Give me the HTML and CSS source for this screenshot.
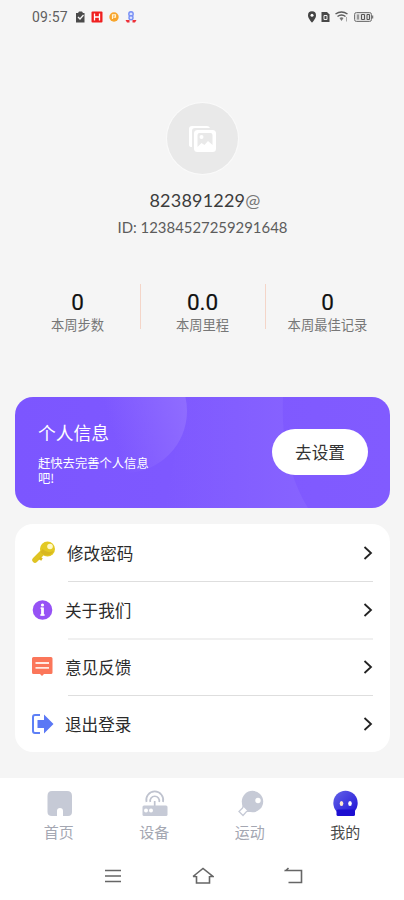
FILE: index.html
```html
<!DOCTYPE html>
<html lang="zh-CN">
<head>
<meta charset="utf-8">
<meta name="viewport" content="width=device-width, initial-scale=1">
<title>我的</title>
<link rel="stylesheet" href="styles.css">
</head>
<body>
<div class="screen">
  <header class="status">
    <span class="time">09:57</span>
    <svg class="status-apps" width="66" height="16" viewBox="0 0 66 16">
      <path d="M2 4h2l1-1.500h3l1 1.500h1.500v9.500H2z" fill="#4a4a4a"/>
      <path d="M4 8l2 2 3.500-4" fill="none" stroke="#f5f5f5" stroke-width="1.300"/>
      <rect x="17.500" y="2.500" width="11" height="11" rx="1" fill="#f02020"/>
      <path d="M20.500 4.500v7M25.500 4.500v7M20.500 8h5" stroke="#fff" stroke-width="1.300"/>
      <circle cx="40" cy="8" r="4.700" fill="#f8a52c"/>
      <path d="M38.500 10V5.800h3v2.400h-2" fill="none" stroke="#fff3d6" stroke-width="1.200"/>
      <circle cx="57" cy="5" r="2.200" fill="#dce3ff" stroke="#7890f5" stroke-width="1.400"/>
      <circle cx="57" cy="8.800" r="2" fill="#dce3ff" stroke="#7890f5" stroke-width="1.400"/>
      <path d="M51.500 11l4 0 0 2.500h-2.500zM62.500 11l-4 0 0 2.500h2.500z" fill="#ed3038"/>
    </svg>
    <svg class="status-system" width="68" height="16" viewBox="0 0 68 16">
      <path d="M5 2.300a4.100 4.100 0 0 1 4 4.100C9 9.500 5 13.500 5 13.500S1 9.500 1 6.400a4.100 4.100 0 0 1 4-4.100z" fill="#444"/>
      <circle cx="5" cy="6.300" r="1.500" fill="#fff"/>
      <path d="M14.500 3h5.500l2.500 2.500v7.500h-8z" fill="#484848"/>
      <path d="M17 6.500h3v4h-3z" fill="none" stroke="#eee"/>
      <path d="M28.500 5q6-4 12 0M30.500 7.500q4-3 8 0" fill="none" stroke="#5b5b5b" stroke-width="1.500"/>
      <path d="M32.500 9q2-1.300 4 0l-2 3z" fill="#777"/>
      <path d="M39.500 8v4.500" stroke="#aaa"/>
      <rect x="47.500" y="3.500" width="17" height="9" rx="2" fill="#ddd" stroke="#777"/>
      <path d="M65.500 6.500v3" stroke="#777" stroke-width="1.500"/>
      <path d="M51 5.500v5M54.500 5.500h3v5h-3zM60 5.500h2.500v5H60z" fill="none" stroke="#555"/>
    </svg>
  </header>

  <section class="profile">
    <div class="avatar">
      <svg width="28" height="28" viewBox="0 0 28 28">
        <path d="M1 20V4q0-3 3-3h15q2 0 3 2H7Q4 3 4 6v16q-3 0-3-2z" fill="#fff"/>
        <rect x="6" y="5" width="22" height="22" rx="3.500" fill="#fff"/>
        <path d="M9.500 10q0-2 2-2h11q2 0 2 2v10l-4.500-4-3.500 4-3-2-4 4z" fill="#e9e9e9"/>
        <circle cx="13.500" cy="12" r="2" fill="#fff"/>
      </svg>
    </div>
    <div class="name">823891229<span>@</span></div>
    <div class="uid">ID: 12384527259291648</div>
  </section>

  <section class="stats">
    <div class="stat"><b>0</b><span>本周步数</span></div>
    <div class="stat"><b>0.0</b><span>本周里程</span></div>
    <div class="stat"><b>0</b><span>本周最佳记录</span></div>
  </section>

  <section class="banner">
    <svg class="banner-art" width="375" height="111" viewBox="0 0 375 111">
      <defs>
        <linearGradient id="disc" x1="0" y1="0.600" x2="1" y2="0.300">
          <stop offset="0.350" stop-color="#9470ff" stop-opacity="0"/>
          <stop offset="1" stop-color="#9270ff" stop-opacity="0.900"/>
        </linearGradient>
        <linearGradient id="band" x1="0" y1="0" x2="1" y2="0">
          <stop offset="0" stop-color="#8763ff" stop-opacity="0"/>
          <stop offset="1" stop-color="#8763ff"/>
        </linearGradient>
      </defs>
      <path d="M170 0h98c-2 48 8 82 25 111H150z" fill="url(#band)"/>
      <circle cx="110" cy="14" r="62" fill="url(#disc)"/>
    </svg>
    <div class="banner-copy">
      <h2>个人信息</h2>
      <p>赶快去完善个人信息吧!</p>
    </div>
    <a class="banner-button">去设置</a>
  </section>

  <nav class="menu">
    <a class="row row-password">
      <svg class="row-icon" width="24" height="24" viewBox="0 0 24 24">
        <path d="M11.500 11.500L4 19" stroke="#dfc323" stroke-width="5.500" stroke-linecap="round"/>
        <path d="M8.500 17l2.500 1.500" stroke="#d9b91c" stroke-width="3"/>
        <circle cx="16.500" cy="8" r="7.500" fill="#e3c922"/>
        <path d="M9.500 11a7.500 7.500 0 0 0 13-1q-6 3-11-2z" fill="#d8b720"/>
        <circle cx="19" cy="5.500" r="2.800" fill="#fff9c5"/>
      </svg>
      <span>修改密码</span>
      <svg class="chevron" width="10" height="14" viewBox="0 0 10 14"><path d="M1.500 1l6.500 6-6.500 6"/></svg>
    </a>
    <a class="row">
      <svg class="row-icon" width="24" height="24" viewBox="0 0 24 24">
        <circle cx="11.500" cy="12" r="9.800" fill="#9652f5"/>
        <circle cx="11.500" cy="7" r="1.600" fill="#fff"/>
        <path d="M11.500 9.500v8" fill="none" stroke="#fff" stroke-width="2.800"/>
        <path d="M9.500 10.200h2M9.300 17h4.400" fill="none" stroke="#fff" stroke-width="1.300"/>
      </svg>
      <span>关于我们</span>
      <svg class="chevron" width="10" height="14" viewBox="0 0 10 14"><path d="M1.500 1l6.500 6-6.500 6"/></svg>
    </a>
    <a class="row">
      <svg class="row-icon" width="24" height="24" viewBox="0 0 24 24">
        <path d="M2.500 2h17.500q1.500 0 1.500 1.500v14q0 1.500-1.500 1.500H13l-2 2-2-2H2.500Q1 19 1 17.500v-14q0-1.500 1.500-1.500z" fill="#fb765a"/>
        <path d="M4.500 8h13.500M4.500 12.800h13.500" stroke="#ffe9e2" stroke-width="1.800"/>
      </svg>
      <span>意见反馈</span>
      <svg class="chevron" width="10" height="14" viewBox="0 0 10 14"><path d="M1.500 1l6.500 6-6.500 6"/></svg>
    </a>
    <a class="row">
      <svg class="row-icon" width="24" height="24" viewBox="0 0 24 24">
        <path d="M9 3H4Q2 3 2 5v14q0 2 2 2h5" fill="none" stroke="#5e80f6" stroke-width="2"/>
        <path d="M6.500 8H13V2.500L22.500 12 13 21.500V16H6.500z" fill="#5b78f5"/>
      </svg>
      <span>退出登录</span>
      <svg class="chevron" width="10" height="14" viewBox="0 0 10 14"><path d="M1.500 1l6.500 6-6.500 6"/></svg>
    </a>
  </nav>

  <footer class="bottom">
    <div class="tabs">
      <a class="tab">
        <svg width="28" height="28" viewBox="0 0 28 28">
          <path d="M7 2h15q5 0 5 5v16q0 4-4 4h-5v-5q0-3-3-3t-3 3v5H7q-4.500 0-4.500-4V7q0-5 4.500-5z" fill="#c6cad6"/>
        </svg>
        <span>首页</span>
      </a>
      <a class="tab">
        <svg width="28" height="28" viewBox="0 0 28 28">
          <path d="M6.500 13a8.500 8.500 0 1 1 16.500 0M10.300 13a4.600 4.600 0 1 1 8.900 0M14.700 12v5" fill="none" stroke="#bfc3cf" stroke-width="1.700"/>
          <rect x="2.500" y="16.500" width="25" height="10.500" rx="1.500" fill="#c6cad6"/>
          <circle cx="6" cy="21.500" r="2" fill="#fff"/><circle cx="11" cy="21.500" r="2" fill="#fff"/>
        </svg>
        <span>设备</span>
      </a>
      <a class="tab">
        <svg width="28" height="28" viewBox="0 0 28 28">
          <circle cx="16.500" cy="12.500" r="10.700" fill="#c6cad6"/>
          <path d="M6.500 11v7l5 5h9l-6-6z" fill="#c6cad6"/>
          <path d="M7.500 17l5 5-2 .5-3.500 4-4-4 3.500-3.500z" fill="#fff" stroke="#c6cad6" stroke-width="1.300"/>
          <circle cx="22" cy="11.500" r="2.700" fill="#fff"/>
        </svg>
        <span>运动</span>
      </a>
      <a class="tab tab-active">
        <svg width="28" height="28" viewBox="0 0 28 28">
          <defs><linearGradient id="head" x1="0" y1="0" x2="1" y2="1"><stop offset="0" stop-color="#6363e8"/><stop offset="0.600" stop-color="#3a32dd"/><stop offset="1" stop-color="#1c0bd2"/></linearGradient></defs>
          <circle cx="14.500" cy="14" r="12.200" fill="url(#head)"/>
          <rect x="5.500" y="20.500" width="18.500" height="6.500" rx="1.500" fill="#1d0ed1"/>
          <ellipse cx="10.500" cy="14.500" rx="1.800" ry="2.500" fill="#ffe7cf"/><ellipse cx="19" cy="14.500" rx="1.800" ry="2.500" fill="#fff"/>
        </svg>
        <span>我的</span>
      </a>
    </div>
    <div class="system-nav">
      <svg width="18" height="16" viewBox="0 0 18 16"><path d="M1 2.500h16M1 8h16M1 13.500h16"/></svg>
      <svg width="22" height="18" viewBox="0 0 22 18"><path d="M4.500 9v7h13V9M1 9.500L11 1.500l10 8h-3M4 9.500H1"/></svg>
      <svg width="20" height="18" viewBox="0 0 20 18"><path d="M5.500 1L3 3.500h15.500v12H5.500M1.500 3.500h3"/></svg>
    </div>
  </footer>
</div>
</body>
</html>
```
FILE: styles.css
```css
* { box-sizing: border-box; }

body {
  margin: 0;
  background: #f5f5f5;
  font-family: "Noto Sans CJK SC", sans-serif;
  color: #222;
}

.screen {
  width: 404px;
  height: 900px;
  display: flex;
  flex-direction: column;
  overflow: hidden;
}

.status {
  height: 33px;
  padding: 0 29px 0 32px;
  display: flex;
  align-items: center;
  flex: none;
}

.time {
  width: 42px;
  font: 14px/16px Roboto, sans-serif;
  letter-spacing: 0.2px;
  color: #606060;
}

.status-system { margin-left: auto; }

.profile {
  height: 251px;
  padding-top: 70px;
  display: flex;
  flex-direction: column;
  align-items: center;
  flex: none;
  font-family: Lato, sans-serif;
}

.avatar {
  width: 71px;
  height: 71px;
  border-radius: 50%;
  background: #e9e9e9;
  box-shadow: 0 0 0 1px #fafafa;
  display: flex;
  align-items: center;
  justify-content: center;
}

.name {
  margin-top: 14px;
  padding-left: 6px;
  font-size: 18px;
  line-height: 24px;
  letter-spacing: 0.2px;
  color: #3c3c3c;
}

.name span { color: #777; }

.uid {
  margin-top: 5px;
  padding-left: 1px;
  font-size: 14.9px;
  line-height: 20px;
  color: #5c5c5c;
}

.stats {
  width: 375px;
  height: 45px;
  margin: 0 0 0 15px;
  display: grid;
  grid-template-columns: repeat(3, 1fr);
  grid-template-rows: 45px;
  flex: none;
}

.stat {
  display: flex;
  flex-direction: column;
  align-items: center;
  padding-top: 6px;
}

.stat + .stat {
  border-left: 1px solid #f4d5c8;
  padding-right: 1px;
}

.stat b {
  font: 400 22.5px/25px Roboto, sans-serif;
  color: #111;
  -webkit-text-stroke: 0.2px #111;
}

.stat span {
  font-size: 13.3px;
  line-height: 19px;
  color: #777;
  white-space: nowrap;
}

.banner {
  position: relative;
  width: 375px;
  height: 111px;
  margin: 68px 0 0 15px;
  padding: 0 22px 0 23px;
  border-radius: 18px;
  overflow: hidden;
  display: flex;
  align-items: center;
  justify-content: space-between;
  flex: none;
  background: linear-gradient(90deg, #7c56ff, #815bff);
  color: #fff;
}

.banner-art {
  position: absolute;
  inset: 0;
}

.banner-copy {
  position: relative;
  width: 115px;
}

.banner h2 {
  margin: 0;
  font-size: 17.8px;
  line-height: 24px;
  font-weight: 400;
}

.banner p {
  margin: 12px 0 0;
  font-size: 12.3px;
  line-height: 15px;
}

.banner-button {
  position: relative;
  width: 96px;
  height: 46px;
  margin-bottom: 1px;
  border-radius: 23px;
  background: #fff;
  color: #333;
  font-size: 16.6px;
  line-height: 46px;
  text-align: center;
}

.menu {
  width: 375px;
  height: 228px;
  margin: 16px 0 0 15px;
  padding: 0 17px 0 16px;
  border-radius: 18px;
  background: #fff;
  flex: none;
}

.row {
  position: relative;
  height: 57px;
  display: flex;
  align-items: center;
  color: #2b2b2b;
  font-size: 16.6px;
  line-height: 24px;
}

.row + .row::before {
  content: "";
  position: absolute;
  top: 0;
  left: 37px;
  right: 0;
  height: 1px;
  background: #dedede;
}

.row:nth-child(3)::before {
  height: 2px;
  background: #f0f0f0;
}

.row-icon { margin-right: 10px; }

.row-password .row-icon { margin-right: 12px; }

.chevron {
  margin-left: auto;
  fill: none;
  stroke: #222;
  stroke-width: 1.8;
}

.bottom {
  height: 122px;
  margin-top: auto;
  padding: 11px 11px 0;
  background: #fff;
  flex: none;
}

.tabs {
  display: grid;
  grid-template-columns: repeat(4, 1fr);
}

.tab {
  display: flex;
  flex-direction: column;
  align-items: center;
  color: #a4a7b2;
  font-size: 15px;
  line-height: 22px;
}

.tab span { margin-top: 4px; }

.tab-active { color: #4a4a4a; }

.system-nav {
  display: flex;
  justify-content: space-between;
  align-items: center;
  width: 199px;
  height: 22px;
  margin: 22px 0 0 93px;
}

.system-nav svg {
  fill: none;
  stroke: #666;
  stroke-width: 1.6;
}
```
